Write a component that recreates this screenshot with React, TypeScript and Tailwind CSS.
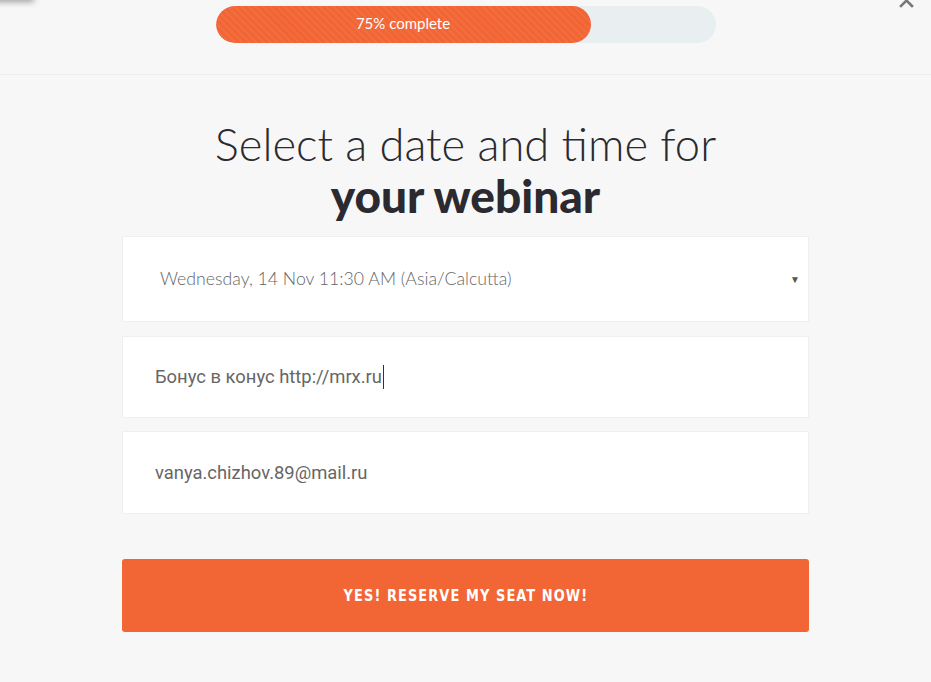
import * as React from "react";

function Field({
  children,
  height,
  className = "",
}: {
  children: React.ReactNode;
  height: string;
  className?: string;
}) {
  return (
    <div
      className={`flex items-center border border-[#efefef] bg-white ${height} ${className}`}
    >
      {children}
    </div>
  );
}

export default function App() {
  return (
    <div className="relative min-h-[682px] w-full overflow-hidden bg-[#f7f7f7]">
      {/* leftover shadow of something above the viewport */}
      <div className="absolute -top-3 -left-2 h-3 w-[42px] bg-[#f7f7f7] shadow-[0_2px_6px_rgba(0,0,0,0.35)]" />

      {/* close */}
      <button className="absolute -top-[7px] right-[17px] text-[#777]">
        <svg width="15" height="15" viewBox="0 0 15 15">
          <path
            d="M2 2 L13 13 M13 2 L2 13"
            stroke="currentColor"
            strokeWidth="2.6"
            strokeLinecap="square"
          />
        </svg>
      </button>

      <header className="flex h-[75px] justify-center border-b border-[#e9eeee] pt-[6px]">
        <div className="h-[37px] w-[500px] overflow-hidden rounded-full bg-[#e9eef1]">
          <div className="flex h-full w-[75%] items-center justify-center rounded-full bg-[repeating-linear-gradient(45deg,#f26535_0px,#f26535_3px,#f36d3f_3px,#f36d3f_5px)] pb-[3px]">
            <span className="font-['Lato',sans-serif] text-[15px] text-white">
              75% complete
            </span>
          </div>
        </div>
      </header>

      <main className="flex flex-col items-center pt-[43px]">
        <h1 className="text-center font-['Lato',sans-serif] text-[#2a2a30]">
          <span className="block text-[45.3px] leading-[52px] font-light">
            Select a date and time for
          </span>
          <span className="block text-[46px] leading-[52px] font-black">
            your webinar
          </span>
        </h1>

        <form className="mt-[14px] flex w-[687px] flex-col">
          <Field height="h-[86px]" className="pl-[37px] pr-[8px]">
            <span className="flex-1 font-['Lato',sans-serif] text-[17.7px] font-light text-[#666]">
              Wednesday, 14 Nov 11:30 AM (Asia/Calcutta)
            </span>
            <span className="text-[10px] text-[#555]">▼</span>
          </Field>
          <Field height="h-[82px]" className="mt-[14px] pl-[32px]">
            <span className="font-['Roboto',sans-serif] text-[18.4px] text-[#666]">
              Бонус в конус http://mrx.ru
            </span>
            <span className="ml-[1px] h-[24px] w-px bg-[#333]" />
          </Field>
          <Field height="h-[83px]" className="mt-[13px] pl-[32px]">
            <span className="font-['Roboto',sans-serif] text-[18.4px] text-[#666]">
              vanya.chizhov.89@mail.ru
            </span>
          </Field>

          <button
            type="button"
            className="mt-[45px] flex h-[73px] items-center justify-center rounded-[3px] bg-[#f26535] text-white"
          >
            <span className="inline-block scale-x-[0.9] whitespace-nowrap font-['DejaVu_Sans',sans-serif] text-[16px] font-bold tracking-[1.2px] font-stretch-condensed">
              YES! RESERVE MY SEAT NOW!
            </span>
          </button>
        </form>
      </main>
    </div>
  );
}
